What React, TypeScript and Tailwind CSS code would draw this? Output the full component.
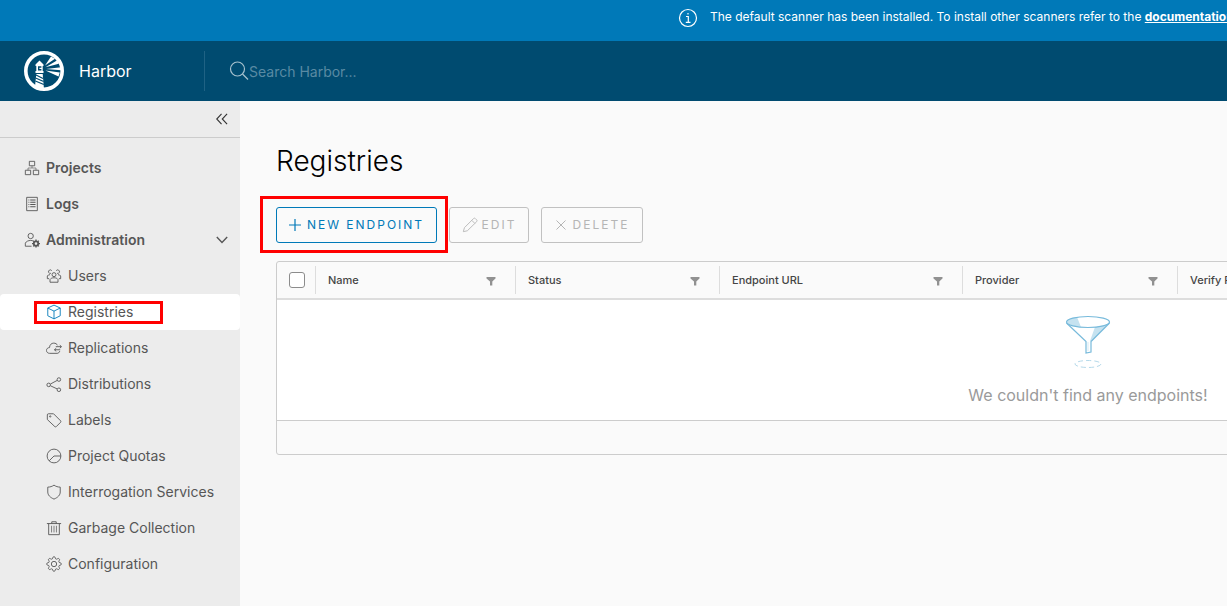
import React from "react";

const base = {
  fill: "none",
  stroke: "currentColor",
  strokeWidth: 2,
  viewBox: "0 0 36 36",
  "aria-hidden": true,
} as const;

type IconProps = { className?: string };
const sized = (c?: string) => c ?? "h-4 w-4 shrink-0";

const ProjectsIcon = ({ className }: IconProps) => (
  <svg {...base} className={sized(className)}>
    <path d="M12 3h12v10H12zM3 23h12v10H3zM21 23h12v10H21z" />
    <path d="M18 13v5M9 23v-5h18v5" strokeWidth="1.400" />
  </svg>
);
const LogsIcon = ({ className }: IconProps) => (
  <svg {...base} className={sized(className)}>
    <path d="M6 3h24v30H6z" />
    <path d="M10 9h2M14 9h12M10 14h2M14 14h12M10 19h2M14 19h12M10 24h2M14 24h12" strokeWidth="2.400" />
  </svg>
);
const AdminIcon = ({ className }: IconProps) => (
  <svg {...base} className={sized(className)}>
    <circle cx="15" cy="9" r="6" />
    <path d="M17 32H3v-7c2-4 7-6 12-6 2 0 4 .3 5 .8" />
    <circle cx="27" cy="26" r="5" strokeWidth="4" />
    <path d="M27 17v3M27 32v3M18 26h3M33 26h3M20.700 19.700l2 2M31.300 30.300l2 2M33.300 19.700l-2 2M22.700 30.300l-2 2" strokeWidth="3" />
  </svg>
);
const UsersIcon = ({ className }: IconProps) => (
  <svg {...base} className={sized(className)}>
    <circle cx="18" cy="15" r="4.500" />
    <path d="M9 32v-6c2-3 5-4 9-4s7 1 9 4v6z" />
    <path d="M11 12a4 4 0 1 1 2-6M25 12a4 4 0 1 0-2-6M9 15c-3 0-5 1-6 3v6h4M27 15c3 0 5 1 6 3v6h-4" />
  </svg>
);
const RegistriesIcon = ({ className }: IconProps) => (
  <svg {...base} className={sized(className)}>
    <path d="M18 2.500 32 9v17.500L18 33.500 4 26.500V9zM4 9l14 7 14-7M18 16v17.500" />
  </svg>
);
const ReplicationsIcon = ({ className }: IconProps) => (
  <svg {...base} className={sized(className)}>
    <path d="M31 25c-1 3-3 5-6 5H8c-4 0-7-3-7-6.500S4 17 8 17c0-6 4-10 9.500-10 4 0 7 2 8.500 5" />
    <path d="M22 15h12M31 11.500l4 3.500-4 3.500M32 22H19M23 18.500 19 22l4 3.500" />
  </svg>
);
const DistributionsIcon = ({ className }: IconProps) => (
  <svg {...base} className={sized(className)}>
    <circle cx="6" cy="20" r="4" />
    <circle cx="29" cy="8" r="4" />
    <circle cx="29" cy="31" r="4" />
    <path d="m10 18 15-8M10 22l15 7" />
  </svg>
);
const LabelsIcon = ({ className }: IconProps) => (
  <svg {...base} className={sized(className)}>
    <path d="M3 6.500Q3 4 5.500 4H17l16 16q1 1.500 0 3L23 33q-1.500 1-3 0L3 17z" />
    <circle cx="9.500" cy="10" r="1.500" />
  </svg>
);
const QuotasIcon = ({ className }: IconProps) => (
  <svg {...base} className={sized(className)}>
    <circle cx="18" cy="18" r="15.500" />
    <path d="M7 29 18 18h15.500" />
  </svg>
);
const ShieldIcon = ({ className }: IconProps) => (
  <svg {...base} className={sized(className)}>
    <path d="M18 2.500c4 3 9 4.500 14 4.500v11c0 7-5 12-14 16C9 30 4 25 4 18V7c5 0 10-1.500 14-4.500z" />
  </svg>
);
const TrashIcon = ({ className }: IconProps) => (
  <svg {...base} className={sized(className)}>
    <path d="M2 8h32M6 8v25h24V8M13 8V4h10v4" />
    <path d="M12.500 13v15M18 13v15M23.500 13v15" strokeWidth="1.600" />
  </svg>
);

const gearOutline = Array.from({ length: 64 }, (_, i) => {
  const angle = (i / 64) * Math.PI * 2;
  const radius = 14.2 + 2.2 * Math.tanh(2 * Math.cos(8 * angle));
  return `${18 + radius * Math.sin(angle)},${18 - radius * Math.cos(angle)}`;
}).join(" ");
const GearIcon = ({ className }: IconProps) => (
  <svg {...base} className={sized(className)}>
    <circle cx="18" cy="18" r="6" />
    <polygon points={gearOutline} strokeLinejoin="round" />
  </svg>
);

const HarborLogo = () => (
  <svg viewBox="0 0 40 40" className="h-10 w-10 shrink-0" aria-hidden="true">
    <circle cx="20" cy="20" r="18.200" fill="none" stroke="#fff" strokeWidth="3.600" />
    <path fill="#fff" d="m15.500 9.500 4 4v1.500h-.8v5h.8v2h-8v-2h.8v-5h-.8v-1.500z" />
    <path fill="#004b70" d="M14 15.300h3.400v1.400H15.400v1.300h2V19.500H14z" />
    <path fill="#fff" d="M12.300 23h6.400l1.300 15.500-9-3z" />
    <path stroke="#004b70" strokeWidth="1.200" d="m12 24 7 3.500M11.600 27l8 3.500M11.400 30l8.400 3.500" />
    <path fill="#fff" d="m21 14.500 6-9 4 2.300zM21.500 16.300l11.800-7 1.500 3.500zM22 17.900l15-1.600v3zM21.500 19.500l14.300 2-1.300 4z" />
  </svg>
);

const FilterIcon = () => (
  <svg viewBox="0 0 10 9" className="mt-0.5 h-[9px] w-2.5 fill-[#919191]" aria-hidden="true">
    <path d="M.5 0h9v1.500L6.300 4.500V8.500H4V4.500L.5 1.500z" />
  </svg>
);

const FunnelArt = () => (
  <svg viewBox="0 0 48 56" className="h-14 w-12" fill="none" stroke="#77badb" aria-hidden="true">
    <path fill="#c5e2f0" stroke="none" d="M3 7c0-2 4-4 10-5l4 10C9 11 3 9.500 3 7zM31 12c7-1 12-2.500 14-4L28 26l-2 0z" />
    <ellipse cx="24" cy="7" rx="21.500" ry="5.500" strokeWidth="1.200" />
    <path d="M2.500 8 22 26.500V38l5-1V26.500L45.500 8" strokeWidth="1.200" />
    <path stroke="#d5eaf4" d="M24 27v9" />
    <ellipse cx="24" cy="49" rx="13" ry="3.500" stroke="#b5d9ea" strokeDasharray="5 3" />
  </svg>
);

const subItems = [
  { label: "Users", Icon: UsersIcon },
  { label: "Registries", Icon: RegistriesIcon, active: true },
  { label: "Replications", Icon: ReplicationsIcon },
  { label: "Distributions", Icon: DistributionsIcon },
  { label: "Labels", Icon: LabelsIcon },
  { label: "Project Quotas", Icon: QuotasIcon },
  { label: "Interrogation Services", Icon: ShieldIcon },
  { label: "Garbage Collection", Icon: TrashIcon },
  { label: "Configuration", Icon: GearIcon },
];

const columns = [
  { label: "Name", width: "w-[200px]" },
  { label: "Status", width: "w-[204px]" },
  { label: "Endpoint URL", width: "w-[243px]" },
  { label: "Provider", width: "w-[215px]" },
  { label: "Verify Remote Cert", width: "w-auto" },
];

function Navigation() {
  return (
    <aside className="w-60 shrink-0 bg-[#ececec] text-sm text-[#565656]">
      <div className="flex h-[37px] items-center justify-end border-b border-[#cccccc] pr-3">
        <button type="button" aria-label="Collapse navigation" className="text-[#333333]">
          <svg {...base} viewBox="0 0 13 12" strokeWidth="1.200" className="h-3 w-3">
            <path d="M6 .5.800 6 6 11.500M12 .5 6.800 6l5.200 5.500" />
          </svg>
        </button>
      </div>
      <nav className="pt-3">
        <a href="#projects" className="flex h-9 items-center gap-1.5 pl-6 font-semibold">
          <ProjectsIcon />
          Projects
        </a>
        <a href="#logs" className="flex h-9 items-center gap-1.5 pl-6 font-semibold">
          <LogsIcon />
          Logs
        </a>
        <button type="button" aria-expanded="true" className="flex h-9 w-full items-center gap-1.5 pr-3 pl-6 font-semibold">
          <AdminIcon />
          Administration
          <svg {...base} viewBox="0 0 12 8" strokeWidth="1.400" className="ml-auto h-2 w-3">
            <path d="m.8 1 5.200 5.500L11.200 1" />
          </svg>
        </button>
        <ul>
          {subItems.map(({ label, Icon, active }) => (
            <li key={label}>
              <a
                href={"#" + label.toLowerCase().replace(" ", "-")}
                aria-current={active ? "page" : undefined}
                className={
                  active
                    ? "relative flex h-9 items-center gap-1.5 rounded bg-white pl-[46px]"
                    : "flex h-9 items-center gap-1.5 pl-[46px]"
                }
              >
                <Icon className={active ? "h-4 w-4 shrink-0 text-[#0079b8]" : undefined} />
                {label}
                {active && <span className="absolute top-[7px] left-[34px] h-[23px] w-[129px] border-3 border-[#ff0000]" />}
              </a>
            </li>
          ))}
        </ul>
      </nav>
    </aside>
  );
}

export default function App() {
  return (
    <div className="flex min-h-screen flex-col overflow-hidden bg-[#fafafa] font-['Inter','Liberation_Sans',sans-serif]">
      <div className="flex h-[41px] items-start gap-3 overflow-hidden bg-[#0079b8] pt-2 pl-[678px] text-xs leading-[18px] whitespace-nowrap text-white">
        <svg {...base} viewBox="0 0 20 20" strokeWidth="1.200" className="h-5 w-5 shrink-0">
          <circle cx="10" cy="10" r="8.500" />
          <path d="M8 8.500h2.300V14M7.800 14.300h4.700M10 5v1.600" />
        </svg>
        <p>
          The default scanner has been installed. To install other scanners refer to the{" "}
          <a href="#documentation" className="font-bold underline">documentation</a>
        </p>
      </div>

      <header className="flex h-[60px] items-center bg-[#004b70] pl-6">
        <a href="#home" className="flex w-[180px] items-center gap-[15px] text-base text-white">
          <HarborLogo />
          Harbor
        </a>
        <label className="flex h-10 flex-1 items-center border-l border-[#1f6284] pl-6 text-[#a6c1ce]">
          <svg {...base} viewBox="0 0 20 20" strokeWidth="1.200" className="h-5 w-5 shrink-0">
            <circle cx="8.500" cy="8" r="7" />
            <path d="m13.500 13 5.500 5.500" />
          </svg>
          <input
            type="search"
            aria-label="Search Harbor"
            placeholder="Search Harbor..."
            className="w-full bg-transparent pt-0.5 text-sm outline-none placeholder:text-[#598aa3]"
          />
        </label>
      </header>

      <div className="flex flex-1">
        <Navigation />
        <main className="min-w-0 flex-1 overflow-hidden pt-10 pl-9">
          <h1 className="text-[28px] leading-10 font-light text-black">Registries</h1>
          <div className="mt-[26px] flex gap-3 text-xs font-normal tracking-[2px]">
            <div className="relative">
              <button type="button" className="flex h-9 w-[161px] items-center justify-center gap-1.5 rounded-[3px] border border-[#0079b8] text-[#0079b8]">
                <svg {...base} viewBox="0 0 12 12" strokeWidth="1.200" className="h-3 w-3">
                  <path d="M6 0v12M0 6h12" />
                </svg>
                NEW ENDPOINT
              </button>
              <span className="pointer-events-none absolute -top-[11px] -left-4 h-[57px] w-[188px] border-3 border-[#ff0000]" />
            </div>
            <button type="button" disabled className="flex h-9 w-20 items-center justify-center gap-1 rounded-[3px] border border-[#c1c1c1] text-[#b5b5b5]">
              <svg {...base} className="h-4 w-4">
                <path d="M3 33 5.500 24 26 3.500q2-2 4 0l3 3q2 2 0 4L12 31zM22 7.500l7 7" />
              </svg>
              EDIT
            </button>
            <button type="button" disabled className="flex h-9 w-[102px] items-center justify-center gap-1.5 rounded-[3px] border border-[#c1c1c1] text-[#b5b5b5]">
              <svg {...base} viewBox="0 0 12 12" strokeWidth="1" className="h-3 w-3">
                <path d="m1.500 1.500 9 9M10.500 1.500l-9 9" />
              </svg>
              DELETE
            </button>
          </div>

          <div className="mt-[18px] w-[1624px] rounded-[3px] border border-[#cccccc]">
            <table className="w-full table-fixed border-separate border-spacing-0">
              <thead>
                <tr>
                  <th className="h-[38px] w-[38px] border-b-2 border-[#dddddd] p-0 pl-0.5">
                    <input type="checkbox" aria-label="Select all" className="mx-auto block h-4 w-4 appearance-none rounded-[3px] border border-[#8c8c8c] bg-white" />
                  </th>
                  {columns.map(({ label, width }) => (
                    <th key={label} scope="col" className={`${width} border-b-2 border-[#dddddd] p-0 text-left text-[11px] font-medium text-[#454545]`}>
                      <div className="flex h-7 items-center justify-between border-l border-[#dddddd] pr-[19px] pl-3">
                        {label}
                        <button type="button" aria-label={"Filter " + label}>
                          <FilterIcon />
                        </button>
                      </div>
                    </th>
                  ))}
                </tr>
              </thead>
              <tbody>
                <tr>
                  <td colSpan={6} className="h-30 bg-white p-0 pt-0.5">
                    <div className="flex flex-col items-center gap-3 text-base text-[#9a9a9a]">
                      <FunnelArt />
                      <p>We couldn't find any endpoints!</p>
                    </div>
                  </td>
                </tr>
              </tbody>
            </table>
            <div className="h-[34px] border-t border-[#cccccc]" />
          </div>
        </main>
      </div>
    </div>
  );
}
